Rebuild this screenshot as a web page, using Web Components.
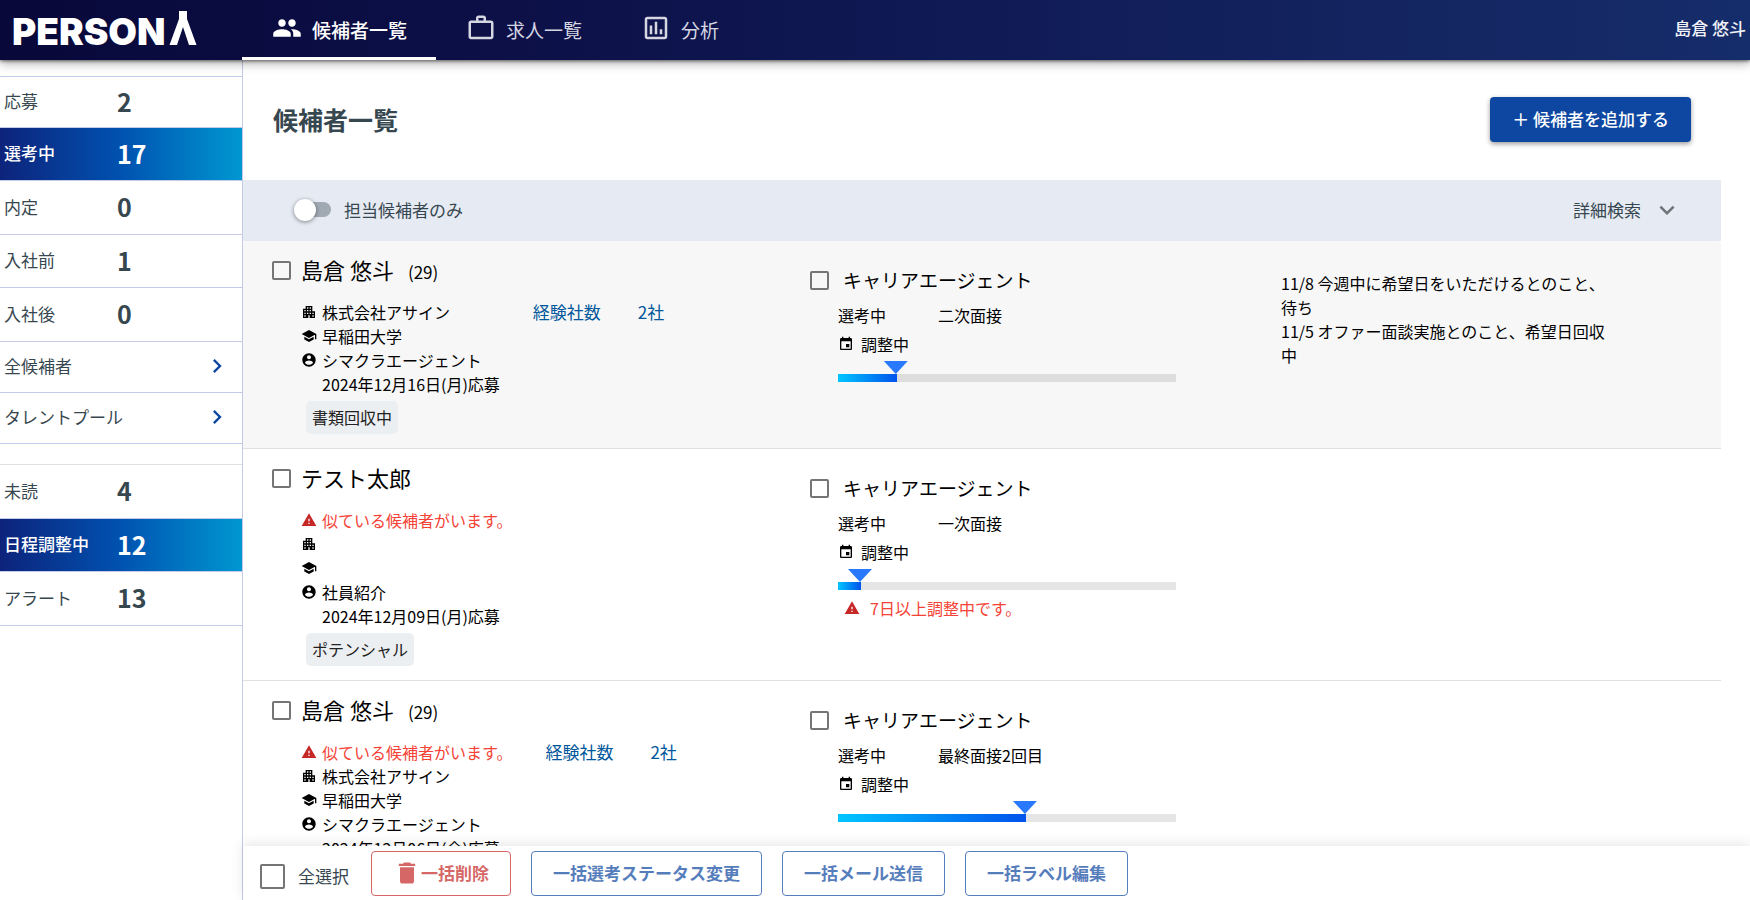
<!DOCTYPE html>
<html lang="ja">
<head>
<meta charset="utf-8">
<meta name="viewport" content="width=device-width, initial-scale=1">
<title>候補者一覧</title>
<style>
  html, body { margin: 0; height: 100%; }
  body { font-family: "Noto Sans CJK JP", sans-serif; font-size: 17px; color: #37474f; background: #fff; overflow: hidden; }
</style>
</head>
<body>
<persona-app></persona-app>

<script>
const ICONS = {
  people: 'M16 11c1.66 0 2.99-1.34 2.99-3S17.66 5 16 5c-1.66 0-3 1.34-3 3s1.34 3 3 3zm-8 0c1.66 0 2.99-1.34 2.99-3S9.66 5 8 5C6.34 5 5 6.34 5 8s1.34 3 3 3zm0 2c-2.33 0-7 1.17-7 3.5V19h14v-2.5c0-2.33-4.67-3.5-7-3.5zm8 0c-.29 0-.62.02-.97.05 1.16.84 1.97 1.97 1.97 3.45V19h6v-2.5c0-2.33-4.67-3.5-7-3.5z',
  work: 'M14 6V4h-4v2h4zM4 8v11h16V8H4zm16-2c1.11 0 2 .89 2 2v11c0 1.11-.89 2-2 2H4c-1.11 0-2-.89-2-2l.01-11c0-1.11.88-2 1.99-2h4V4c0-1.11.89-2 2-2h4c1.11 0 2 .89 2 2v2h4z',
  chart: 'M9 17H7v-7h2v7zm4 0h-2V7h2v10zm4 0h-2v-4h2v4zm2 2H5V5h14v14zm0-16H5c-1.1 0-2 .9-2 2v14c0 1.1.9 2 2 2h14c1.1 0 2-.9 2-2V5c0-1.1-.9-2-2-2z',
  company: 'M17 11V3H7v4H3v14h8v-4h2v4h8V11h-4zM7 19H5v-2h2v2zm0-4H5v-2h2v2zm0-4H5V9h2v2zm4 4H9v-2h2v2zm0-4H9V9h2v2zm0-4H9V5h2v2zm4 8h-2v-2h2v2zm0-4h-2V9h2v2zm0-4h-2V5h2v2zm4 12h-2v-2h2v2zm0-4h-2v-2h2v2z',
  school: 'M5 13.18v4L12 21l7-3.82v-4L12 17l-7-3.82zM12 3L1 9l11 6 9-4.91V17h2V9L12 3z',
  account: 'M12 2C6.48 2 2 6.48 2 12s4.48 10 10 10 10-4.48 10-10S17.52 2 12 2zm0 3c1.66 0 3 1.34 3 3s-1.34 3-3 3-3-1.34-3-3 1.34-3 3-3zm0 14.2c-2.5 0-4.71-1.28-6-3.22.03-1.99 4-3.08 6-3.08 1.99 0 5.97 1.09 6 3.08-1.29 1.94-3.5 3.22-6 3.22z',
  warning: 'M1 21h22L12 2 1 21zm12-3h-2v-2h2v2zm0-4h-2v-4h2v4z',
  event: 'M17 12h-5v5h5v-5zM16 1v2H8V1H6v2H5c-1.11 0-1.99.9-1.99 2L3 19c0 1.1.89 2 2 2h14c1.1 0 2-.9 2-2V5c0-1.1-.9-2-2-2h-1V1h-2zm3 18H5V8h14v11z',
  trash: 'M6 19c0 1.1.9 2 2 2h8c1.1 0 2-.9 2-2V7H6v12zM19 4h-3.5l-1-1h-5l-1 1H5v2h14V4z',
  right: 'M10 6L8.59 7.41 13.17 12l-4.58 4.59L10 18l6-6z',
  down: 'M16.59 8.59L12 13.17 7.41 8.59 6 10l6 6 6-6z'
};

function define(name, html, setup) {
  const template = document.createElement('template');
  template.innerHTML = html;
  customElements.define(name, class extends HTMLElement {
    connectedCallback() {
      if (this.shadowRoot) return;
      this.attachShadow({ mode: 'open' }).append(template.content.cloneNode(true));
      if (setup) setup(this, this.shadowRoot);
    }
  });
}

define('app-icon', `
<style>
  :host { display: inline-flex; flex: none; width: var(--size, 16px); height: var(--size, 16px); }
  svg { width: 100%; height: 100%; fill: currentColor; display: block; }
</style>
<svg viewBox="0 0 24 24" aria-hidden="true"><path/></svg>`,
(el, root) => root.querySelector('path').setAttribute('d', ICONS[el.getAttribute('name')]));

define('brand-logo', `
<style>
  :host { display: block; }
  a { display: flex; align-items: flex-end; gap: 4px; color: #fff; text-decoration: none; font: 900 37px/42px Inter, sans-serif; }
  svg { width: 28px; height: 34px; fill: #fff; margin-bottom: 8px; }
</style>
<a href="#" aria-label="PERSONA"><span>PERSON</span><svg viewBox="0 0 28 34" aria-hidden="true"><path d="M10 0h8v8l9.500 26H20L14 16 8 34H.500L10 8z"/></svg></a>`);

define('nav-tab', `
<style>
  :host { display: flex; color: #d5d6e2; }
  :host([active]) { color: #fff; }
  a { display: flex; align-items: center; gap: 10px; padding: 0 29px 0 30px; color: inherit; text-decoration: none; font-size: 19px; border-bottom: 3px solid transparent; --size: 30px; }
  :host([active]) a { font-weight: 500; border-color: #fff; }
  app-icon { margin-bottom: 2px; }
  span { padding-top: 2px; }
</style>
<a href="#"><app-icon></app-icon><span><slot></slot></span></a>`,
(el, root) => {
  const icon = root.querySelector('app-icon');
  const fresh = document.createElement('app-icon');
  fresh.setAttribute('name', el.getAttribute('icon'));
  icon.replaceWith(fresh);
});

define('app-header', `
<style>
  :host { display: flex; height: 60px; background: linear-gradient(90deg, #08083a, #0d124a 35%, #162d6b); box-shadow: 0 1px 3px rgba(0,0,0,.5), 0 3px 10px rgba(0,0,0,.35); position: relative; z-index: 3; color: #fff; }
  brand-logo { flex: none; width: 242px; box-sizing: border-box; padding: 11px 0 0 12px; }
  nav { display: flex; flex: 1; }
  .user { display: flex; align-items: center; margin: 0 4px 6px 0; font-weight: 500; color: #f0f1f6; }
</style>
<brand-logo></brand-logo>
<nav>
  <nav-tab icon="people" active>候補者一覧</nav-tab>
  <nav-tab icon="work">求人一覧</nav-tab>
  <nav-tab icon="chart">分析</nav-tab>
</nav>
<div class="user">島倉 悠斗</div>`);

define('side-item', `
<style>
  :host { display: block; height: 53px; border-bottom: 1px solid #c5cae9; box-sizing: border-box; }
  :host([tall]) { height: 54px; }
  :host([low]) { height: 51px; }
  a { display: flex; align-items: center; height: 100%; box-sizing: border-box; padding: 0 11px 3px 4px; color: inherit; text-decoration: none; }
  .label { width: 113px; flex: none; white-space: nowrap; }
  b { font-size: 25px; line-height: 34px; }
  app-icon { display: none; color: #0d47a1; --size: 28px; margin-left: auto; }
  :host([link]) app-icon { display: inline-flex; }
  :host([active]) a { background: linear-gradient(90deg, #0d237b, #0052b0 50%, #0097d1); color: #fff; }
  :host([active]) .label { font-weight: 500; }
</style>
<a href="#"><span class="label"><slot></slot></span><b></b><app-icon name="right"></app-icon></a>`,
(el, root) => { root.querySelector('b').textContent = el.getAttribute('count') || ''; });

define('side-menu', `
<style>
  :host { display: block; width: 242px; flex: none; border-right: 1px solid #c5cae9; padding-top: 16px; }
  .group { border-top: 1px solid #c5cae9; }
  .group + .group { margin-top: 20px; border-color: #e0e0e0; }
</style>
<div class="group">
  <side-item count="2" low>応募</side-item>
  <side-item count="17" active>選考中</side-item>
  <side-item count="0" tall>内定</side-item>
  <side-item count="1">入社前</side-item>
  <side-item count="0" tall>入社後</side-item>
  <side-item link low>全候補者</side-item>
  <side-item link low>タレントプール</side-item>
</div>
<div class="group">
  <side-item count="4" tall>未読</side-item>
  <side-item count="12" active>日程調整中</side-item>
  <side-item count="13" tall>アラート</side-item>
</div>`);

define('check-box', `
<style>
  :host { display: flex; }
  label { display: flex; align-items: center; gap: var(--gap, 10px); height: 32px; line-height: 24px; }
  input { appearance: none; flex: none; margin: 0; box-sizing: border-box; width: var(--box, 19px); height: var(--box, 19px); border: 2px solid #757575; border-radius: 2px; background: transparent; }
  input:checked { background: #0d47a1; border-color: #0d47a1; }
</style>
<label><input type="checkbox"><span><slot></slot></span></label>`);

define('toggle-switch', `
<style>
  :host { display: flex; }
  label { display: flex; align-items: center; gap: 13px; }
  input { appearance: none; margin: 0 0 0 8px; width: 29px; height: 15px; border-radius: 8px; background: #a1a9b3; display: flex; align-items: center; }
  input::before { content: ""; flex: none; width: 22px; height: 22px; margin-left: -8px; border-radius: 50%; background: #fff; box-shadow: 0 1px 4px rgba(0,0,0,.45); }
  input:checked { background: #90a8d0; }
  input:checked::before { margin-left: 15px; background: #0d47a1; }
</style>
<label><input type="checkbox" role="switch"><span><slot></slot></span></label>`);

define('progress-bar', `
<style>
  :host { display: block; height: 8px; background: rgba(0,0,0,.1); }
  .fill { position: relative; height: 100%; background: linear-gradient(90deg, #00c6ff, #0052ec); }
  .fill::after { content: ""; position: absolute; right: -11px; bottom: 100%; width: 24px; height: 13px; background: #2979ff; clip-path: polygon(0 0, 100% 0, 50% 100%); }
</style>
<div class="fill" role="progressbar" aria-label="選考の進捗" aria-valuemin="0" aria-valuemax="100"></div>`,
(el, root) => {
  const fill = root.querySelector('.fill');
  fill.style.width = el.getAttribute('value') + '%';
  fill.setAttribute('aria-valuenow', el.getAttribute('value'));
});

define('info-line', `
<style>
  :host { display: flex; align-items: center; gap: 5px; height: 24px; white-space: nowrap; }
  :host([alert]) { color: #f44336; }
  :host([alert]) app-icon { color: #c62828; }
  .none { width: 16px; }
</style>
<span class="none"></span><slot></slot>`,
(el, root) => {
  if (!el.hasAttribute('icon')) return;
  const icon = document.createElement('app-icon');
  icon.setAttribute('name', el.getAttribute('icon'));
  root.querySelector('.none').replaceWith(icon);
});

define('candidate-row', `
<style>
  :host { display: grid; grid-template-columns: 538fr 471fr 440fr; padding: 13px 0 14px 29px; border-bottom: 1px solid #e0e0e0; color: #000; font-size: 16px; line-height: 24px; }
  :host([hovered]) { background: #f7f7f7; border-radius: 4px 4px 0 0; }
  .name { font-size: 22px; }
  .age { font-size: 17px; margin-left: 14px; }
  .profile { display: flex; gap: 33px; margin: 14px 0 5px 29px; }
  .history { display: flex; gap: 37px; height: 24px; font-size: 17px; color: #01579b; white-space: nowrap; }
  .chip { display: block; width: fit-content; margin-left: 34px; padding: 0 6px; line-height: 33px; background: #eceff1; color: #212121; border-radius: 5px; }
  .job { padding-top: 10px; }
  .job check-box { font-size: 19px; --gap: 14px; }
  .state { width: 338px; margin-left: 28px; padding-top: 7px; }
  .step { display: grid; grid-template-columns: 100px 1fr; }
  .schedule { display: flex; align-items: center; gap: 7px; padding: 5px 0 18px; }
  .alert { padding: 6px 0 0 6px; display: flex; align-items: center; gap: 10px; color: #f44336; }
  .alert app-icon { color: #c62828; }
  .memo { padding: 17px 110px 0 0; white-space: pre-line; }
</style>
<div>
  <check-box><span class="name"></span><span class="age"></span></check-box>
  <div class="profile"><div><slot></slot></div><div class="history"></div></div>
  <span class="chip"></span>
</div>
<div class="job">
  <check-box>キャリアエージェント</check-box>
  <div class="state">
    <div class="step"><span>選考中</span><span class="stage"></span></div>
    <div class="schedule"><app-icon name="event"></app-icon><span>調整中</span></div>
  </div>
</div>
<div class="memo"><slot name="memo"></slot></div>`,
(el, root) => {
  const $ = s => root.querySelector(s), get = n => el.getAttribute(n);
  $('.name').textContent = get('name');
  if (get('age')) $('.age').textContent = '(' + get('age') + ')'; else $('.age').remove();
  if (get('companies')) {
    for (const t of ['経験社数', get('companies') + '社']) {
      const s = document.createElement('span');
      s.textContent = t;
      $('.history').append(s);
    }
  }
  $('.chip').textContent = get('label');
  $('.stage').textContent = get('stage');
  const bar = document.createElement('progress-bar');
  bar.setAttribute('value', get('progress'));
  $('.state').append(bar);
  if (get('alert')) {
    const alert = document.createElement('div');
    alert.className = 'alert';
    alert.innerHTML = '<app-icon name="warning"></app-icon><span></span>';
    alert.lastChild.textContent = get('alert');
    $('.state').append(alert);
  }
});

define('bulk-button', `
<style>
  :host { display: flex; --tone: #0d47a1; }
  :host([danger]) { --tone: #c62828; }
  button { display: flex; align-items: center; box-sizing: border-box; height: 45px; padding: 0 21px 2px; border: 1px solid var(--tone); border-radius: 4px; background: #fff; color: var(--tone); opacity: .7; font: bold 17px/24px "Noto Sans CJK JP", sans-serif; --size: 28px; white-space: nowrap; }
</style>
<button type="button"><slot></slot></button>`);

define('bulk-bar', `
<style>
  :host { display: flex; align-items: flex-start; gap: 20px; padding: 5px 0 4px 17px; background: #fff; position: relative; z-index: 2; box-shadow: 0 -2px 12px rgba(0,0,0,.1); }
  check-box { --box: 25px; --gap: 13px; padding: 9px 2px 0 0; }
</style>
<check-box>全選択</check-box>
<bulk-button danger><app-icon name="trash"></app-icon>一括削除</bulk-button>
<bulk-button>一括選考ステータス変更</bulk-button>
<bulk-button>一括メール送信</bulk-button>
<bulk-button>一括ラベル編集</bulk-button>`);

define('candidate-page', `
<style>
  :host { display: flex; flex-direction: column; flex: 1; min-width: 0; min-height: 0; }
  .scroll { flex: 1; min-height: 0; overflow-y: auto; scrollbar-width: none; padding-right: 29px; }
  .title { display: flex; align-items: center; justify-content: space-between; height: 118px; padding: 0 30px 2px; }
  h1 { margin: 0; font-size: 25px; line-height: 36px; font-weight: 700; }
  .add { height: 45px; padding: 0 22px; border: 0; border-radius: 4px; background: #0d47a1; color: #fff; font: 500 17px/24px "Noto Sans CJK JP", sans-serif; box-shadow: 0 2px 5px rgba(0,0,0,.4); }
  .filter { display: flex; align-items: center; justify-content: space-between; height: 59px; padding: 0 39px 2px 51px; background: #e5eaf3; }
  .detail { display: flex; align-items: center; gap: 11px; padding: 0; border: 0; background: none; color: inherit; font: inherit; --size: 30px; }
  .detail app-icon { color: #6b7478; }
</style>
<div class="scroll">
  <div class="title"><h1>候補者一覧</h1><button class="add" type="button">＋ 候補者を追加する</button></div>
  <div class="filter">
    <toggle-switch>担当候補者のみ</toggle-switch>
    <button class="detail" type="button">詳細検索<app-icon name="down"></app-icon></button>
  </div>
  <candidate-row hovered name="島倉 悠斗" age="29" companies="2" label="書類回収中" stage="二次面接" progress="17.4">
    <info-line icon="company">株式会社アサイン</info-line>
    <info-line icon="school">早稲田大学</info-line>
    <info-line icon="account">シマクラエージェント</info-line>
    <info-line>2024年12月16日(月)応募</info-line>
    <div slot="memo">11/8 今週中に希望日をいただけるとのこと、待ち
11/5 オファー面談実施とのこと、希望日回収中</div>
  </candidate-row>
  <candidate-row name="テスト太郎" label="ポテンシャル" stage="一次面接" progress="6.8" alert="7日以上調整中です。">
    <info-line icon="warning" alert>似ている候補者がいます。</info-line>
    <info-line icon="company"></info-line>
    <info-line icon="school"></info-line>
    <info-line icon="account">社員紹介</info-line>
    <info-line>2024年12月09日(月)応募</info-line>
  </candidate-row>
  <candidate-row name="島倉 悠斗" age="29" companies="2" label="書類回収中" stage="最終面接2回目" progress="55.6">
    <info-line icon="warning" alert>似ている候補者がいます。</info-line>
    <info-line icon="company">株式会社アサイン</info-line>
    <info-line icon="school">早稲田大学</info-line>
    <info-line icon="account">シマクラエージェント</info-line>
    <info-line>2024年12月06日(金)応募</info-line>
  </candidate-row>
</div>
<bulk-bar></bulk-bar>`);

define('persona-app', `
<style>
  :host { display: flex; flex-direction: column; height: 100vh; }
  .body { display: flex; flex: 1; min-height: 0; }
</style>
<app-header></app-header>
<div class="body"><side-menu></side-menu><candidate-page></candidate-page></div>`);
</script>
</body>
</html>
